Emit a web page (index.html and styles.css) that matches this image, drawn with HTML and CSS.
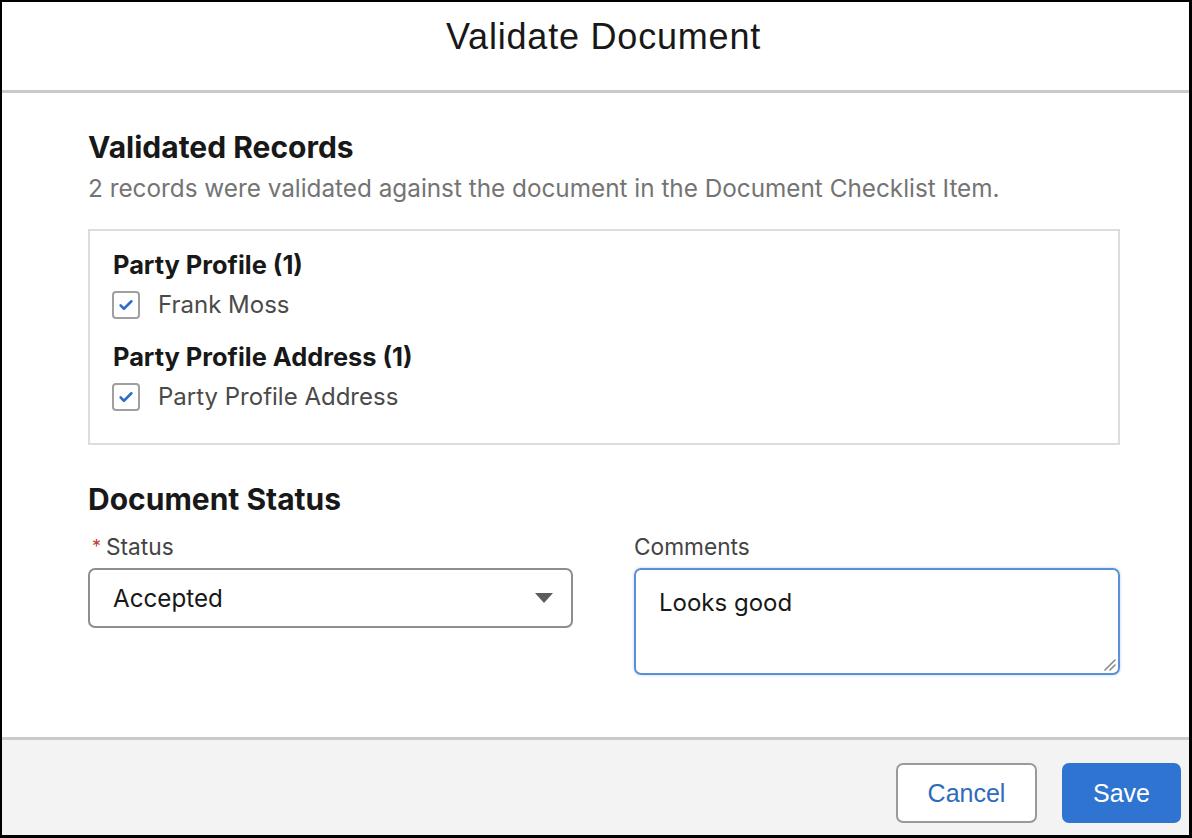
FILE: index.html
```html
<!DOCTYPE html>
<html lang="en">
<head>
    <meta charset="UTF-8">
    <meta name="viewport" content="width=device-width, initial-scale=1.0">
    <title>Validate Document</title>
    <link rel="stylesheet" href="styles.css">
</head>
<body>
    <div class="modal">
        <div class="modal-header">
            <h1 class="modal-title">Validate Document</h1>
        </div>

        <div class="modal-body">
            <h2 class="section-title">Validated Records</h2>
            <p class="section-desc">2 records were validated against the document in the Document Checklist Item.</p>

            <div class="records-box">
                <div class="record-group">
                    <div class="group-title">Party Profile (1)</div>
                    <label class="check-row">
                        <span class="checkbox">
                            <svg viewBox="0 0 24 24" width="20" height="20"><path d="M5.5 12.5l4 4L18.5 7.5" fill="none" stroke="#2d6dc6" stroke-width="3" stroke-linecap="round" stroke-linejoin="round"/></svg>
                        </span>
                        Frank Moss
                    </label>
                </div>
                <div class="record-group">
                    <div class="group-title">Party Profile Address (1)</div>
                    <label class="check-row">
                        <span class="checkbox">
                            <svg viewBox="0 0 24 24" width="20" height="20"><path d="M5.5 12.5l4 4L18.5 7.5" fill="none" stroke="#2d6dc6" stroke-width="3" stroke-linecap="round" stroke-linejoin="round"/></svg>
                        </span>
                        Party Profile Address
                    </label>
                </div>
            </div>

            <h2 class="section-title status-title">Document Status</h2>
            <div class="form-row">
                <div class="field">
                    <div class="field-label"><span class="required">*</span>Status</div>
                    <div class="select">
                        <span>Accepted</span>
                        <svg class="caret" viewBox="0 0 18 10" width="18" height="10"><path d="M0 0h18L9 10z" fill="#5c5c5c"/></svg>
                    </div>
                </div>
                <div class="field">
                    <div class="field-label">Comments</div>
                    <div class="textarea">
                        Looks good
                        <svg class="grip" viewBox="0 0 14 14" width="14" height="14"><path d="M13 3L3 13M13 8L8 13" stroke="#8a8a8a" stroke-width="1.6" stroke-linecap="round"/></svg>
                    </div>
                </div>
            </div>
        </div>

        <div class="modal-footer">
            <button class="btn btn-neutral">Cancel</button>
            <button class="btn btn-brand">Save</button>
        </div>
    </div>
</body>
</html>
```

FILE: styles.css
```css
body {
    margin: 0;
    background: #000;
    font-family: Inter, 'Liberation Sans', sans-serif;
}

.modal {
    box-sizing: border-box;
    width: 1192px;
    height: 838px;
    border: solid #000;
    border-width: 2px 3px 3px 2px;
    background: white;
    display: flex;
    flex-direction: column;
}

.modal-header {
    height: 88px;
    padding-left: 16px;
    border-bottom: 3px solid #cacaca;
    text-align: center;
}

.modal-title {
    margin: 0;
    padding-top: 12px;
    font-family: 'Liberation Sans', Arial, sans-serif;
    font-size: 36px;
    line-height: 46px;
    font-weight: normal;
    color: #181818;
    letter-spacing: 0.8px;
}

.modal-body {
    flex: 1;
    padding: 38px 69px 0 86px;
}

.section-title {
    margin: 0;
    font-size: 30px;
    line-height: 32px;
    font-weight: 700;
    color: #181818;
}

.section-desc {
    margin: 11px 0 0;
    font-size: 24.3px;
    line-height: 28px;
    color: #747474;
}

.records-box {
    margin-top: 27px;
    height: 216px;
    box-sizing: border-box;
    border: 2px solid #dddddd;
    padding: 21px 23px 0;
}

.record-group + .record-group {
    margin-top: 24px;
}

.group-title {
    font-size: 25.4px;
    line-height: 26px;
    font-weight: 700;
    color: #181818;
}

.check-row {
    margin-top: 12px;
    display: flex;
    align-items: center;
    gap: 18px;
    font-size: 24px;
    line-height: 30px;
    color: #4a4a4a;
}

.checkbox {
    box-sizing: border-box;
    width: 28px;
    height: 28px;
    margin-left: -1px;
    border: 2px solid #a0a0a0;
    border-radius: 4px;
    display: flex;
    align-items: center;
    justify-content: center;
}

.status-title {
    margin-top: 38px;
}

.form-row {
    margin-top: 20px;
    display: grid;
    grid-template-columns: 485px 486px;
    column-gap: 61px;
}

.field-label {
    font-size: 22.7px;
    line-height: 24px;
    color: #444;
    margin-bottom: 9px;
}

.required {
    display: inline-block;
    font-size: 18px;
    vertical-align: top;
    color: #c23934;
    margin: 0 5px 0 4px;
}

.select {
    box-sizing: border-box;
    height: 60px;
    border: 2px solid #8e8e8e;
    border-radius: 7px;
    padding: 0 18px 0 23px;
    display: flex;
    align-items: center;
    justify-content: space-between;
    font-size: 24.2px;
    color: #181818;
}

.textarea {
    position: relative;
    box-sizing: border-box;
    height: 107px;
    border: 2px solid #5b8fd6;
    border-radius: 7px;
    box-shadow: 0 0 3px #b7cff0;
    padding: 20px 23px;
    font-size: 24px;
    line-height: 26px;
    color: #181818;
}

.grip {
    position: absolute;
    right: 2px;
    bottom: 2px;
}

.modal-footer {
    height: 98px;
    border-top: 3px solid #cacaca;
    background: #f3f3f3;
    box-sizing: border-box;
    padding: 23px 8px 0 0;
    display: flex;
    justify-content: flex-end;
    align-items: flex-start;
    gap: 25px;
}

.btn {
    height: 60px;
    border-radius: 7px;
    font-family: 'Liberation Sans', Arial, sans-serif;
    font-size: 25px;
    cursor: pointer;
}

.btn-neutral {
    width: 141px;
    background: white;
    border: 2px solid #9a9a9a;
    color: #2f6bbd;
}

.btn-brand {
    width: 119px;
    background: #2f74d0;
    border: 2px solid #2f74d0;
    color: white;
}
```
